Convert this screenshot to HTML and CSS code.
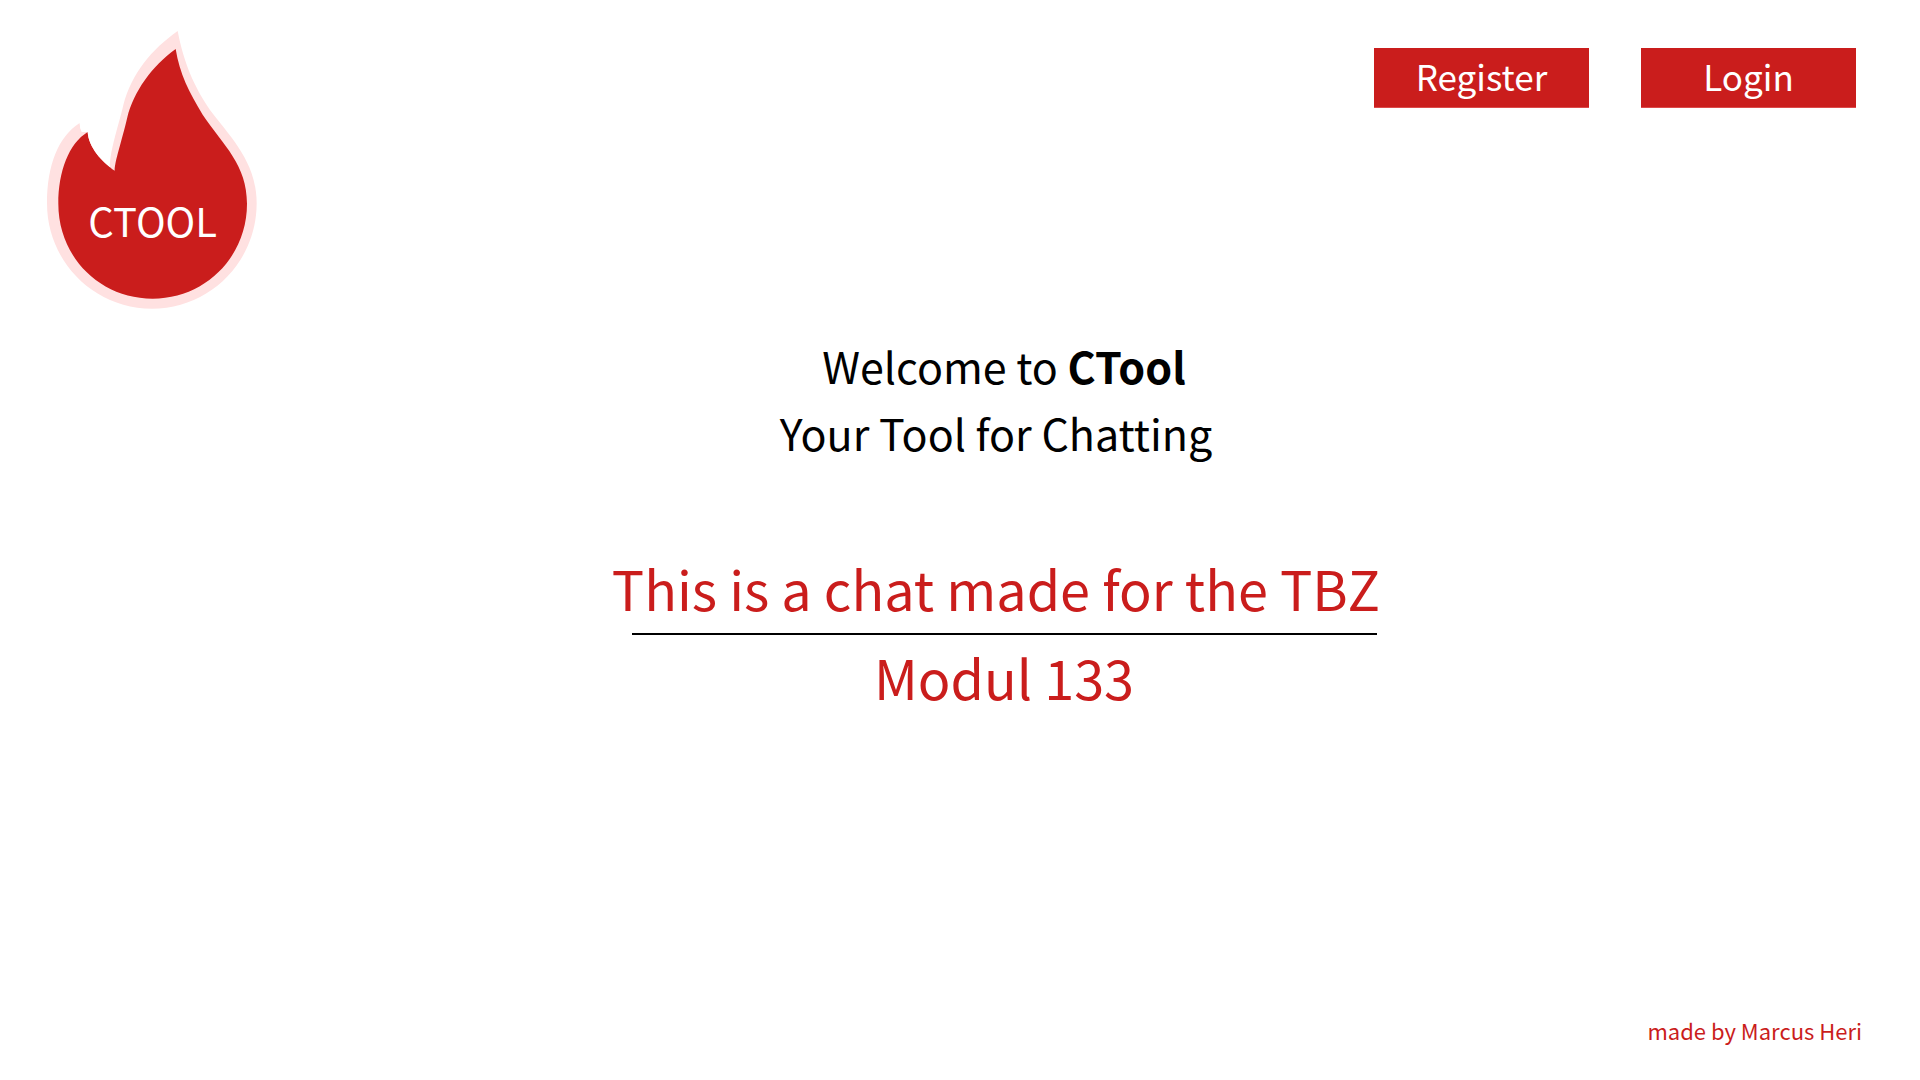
FILE: index.html
```html
<!DOCTYPE html>
<html lang="en">
<head>
<meta charset="utf-8">
<meta name="viewport" content="width=device-width, initial-scale=1">
<title>CTool</title>
<link rel="stylesheet" href="styles.css">
</head>
<body>
<header class="header">
  <svg class="logo" viewBox="0 0 720 900" role="img" aria-label="CTOOL">
    <path class="flame-glow" d="M443 33C365 88 305 160 280 255C268 310 238 395 240 442L254 452L172 336L155 335Q149 325 149 309C85 350 51 435 51 550C51 725 192 866 366 866C540 866 680 725 680 550C680 425 600 350 540 270C490 195 462 130 443 33Z"/>
    <path class="flame" d="M437 87C366 138 311 215 292 292C275 365 254 425 254 452C215 425 176 382 173 336C116 371 85 455 85 551C85 710 208 836 368 836C526 836 651 710 651 551C651 434 582 378 518 284C477 216 449 162 437 87Z"/>
    <path class="notch" d="M149 309Q151 328 156 336L173 336C176 382 215 425 254 452L240 442C236 420 246 374 256 340L220 300Z"/>
    <text class="logo-text" x="368" y="650" text-anchor="middle">CTOOL</text>
  </svg>
  <nav class="actions">
    <button class="button" type="button">Register</button>
    <button class="button" type="button">Login</button>
  </nav>
</header>
<main class="main">
  <h1 class="welcome">Welcome to <strong>CTool</strong></h1>
  <p class="welcome lead">Your Tool for Chatting</p>
  <section class="about">
    <p class="headline lead">This is a chat made for the TBZ</p>
    <hr class="rule">
    <p class="headline">Modul 133</p>
  </section>
</main>
<footer class="footer">made by Marcus Heri</footer>
</body>
</html>
```
FILE: styles.css
```css
* { box-sizing: border-box; }

body {
  margin: 0;
  min-height: 100vh;
  display: flex;
  flex-direction: column;
  background: #fff;
  color: #000;
  font-family: "Noto Sans CJK SC", "Noto Sans", sans-serif;
}

.header {
  display: flex;
  justify-content: space-between;
  align-items: flex-start;
  padding: 20px 64px 0 30px;
}

.logo { width: 240px; height: 300px; }
.flame-glow { fill: #ffe1e1; }
.flame { fill: #ca1d1c; }
.notch { fill: #fff; }
.logo-text { fill: #fff; font-size: 120px; }

.actions {
  display: flex;
  gap: 52px;
  padding-top: 28px;
}

.button {
  width: 215px;
  height: 60px;
  padding: 0 0 4px;
  border: 0;
  border-bottom: 1px solid #dc4a4a;
  background: #ca1d1c;
  color: #fff;
  font-family: inherit;
  font-size: 35px;
  line-height: 54px;
  cursor: pointer;
}

.main {
  display: flex;
  flex-direction: column;
  align-items: center;
  padding: 12px 0 0 88px;
  text-align: center;
}

.welcome {
  margin: 0;
  font-size: 43px;
  font-weight: 400;
  line-height: 67px;
}

.lead { padding-right: 16px; }

.about {
  display: flex;
  flex-direction: column;
  align-items: center;
  padding-top: 86px;
}

.headline {
  margin: 0;
  color: #ca1d1c;
  font-size: 54px;
  line-height: 72px;
}

.rule {
  width: 745px;
  max-width: 100%;
  height: 2px;
  margin: 9px 0 6px;
  border: 0;
  background: #000;
}

.footer {
  margin-top: auto;
  padding: 0 58px 33px;
  color: #ca1d1c;
  font-size: 22px;
  line-height: 34px;
  text-align: right;
}
```
